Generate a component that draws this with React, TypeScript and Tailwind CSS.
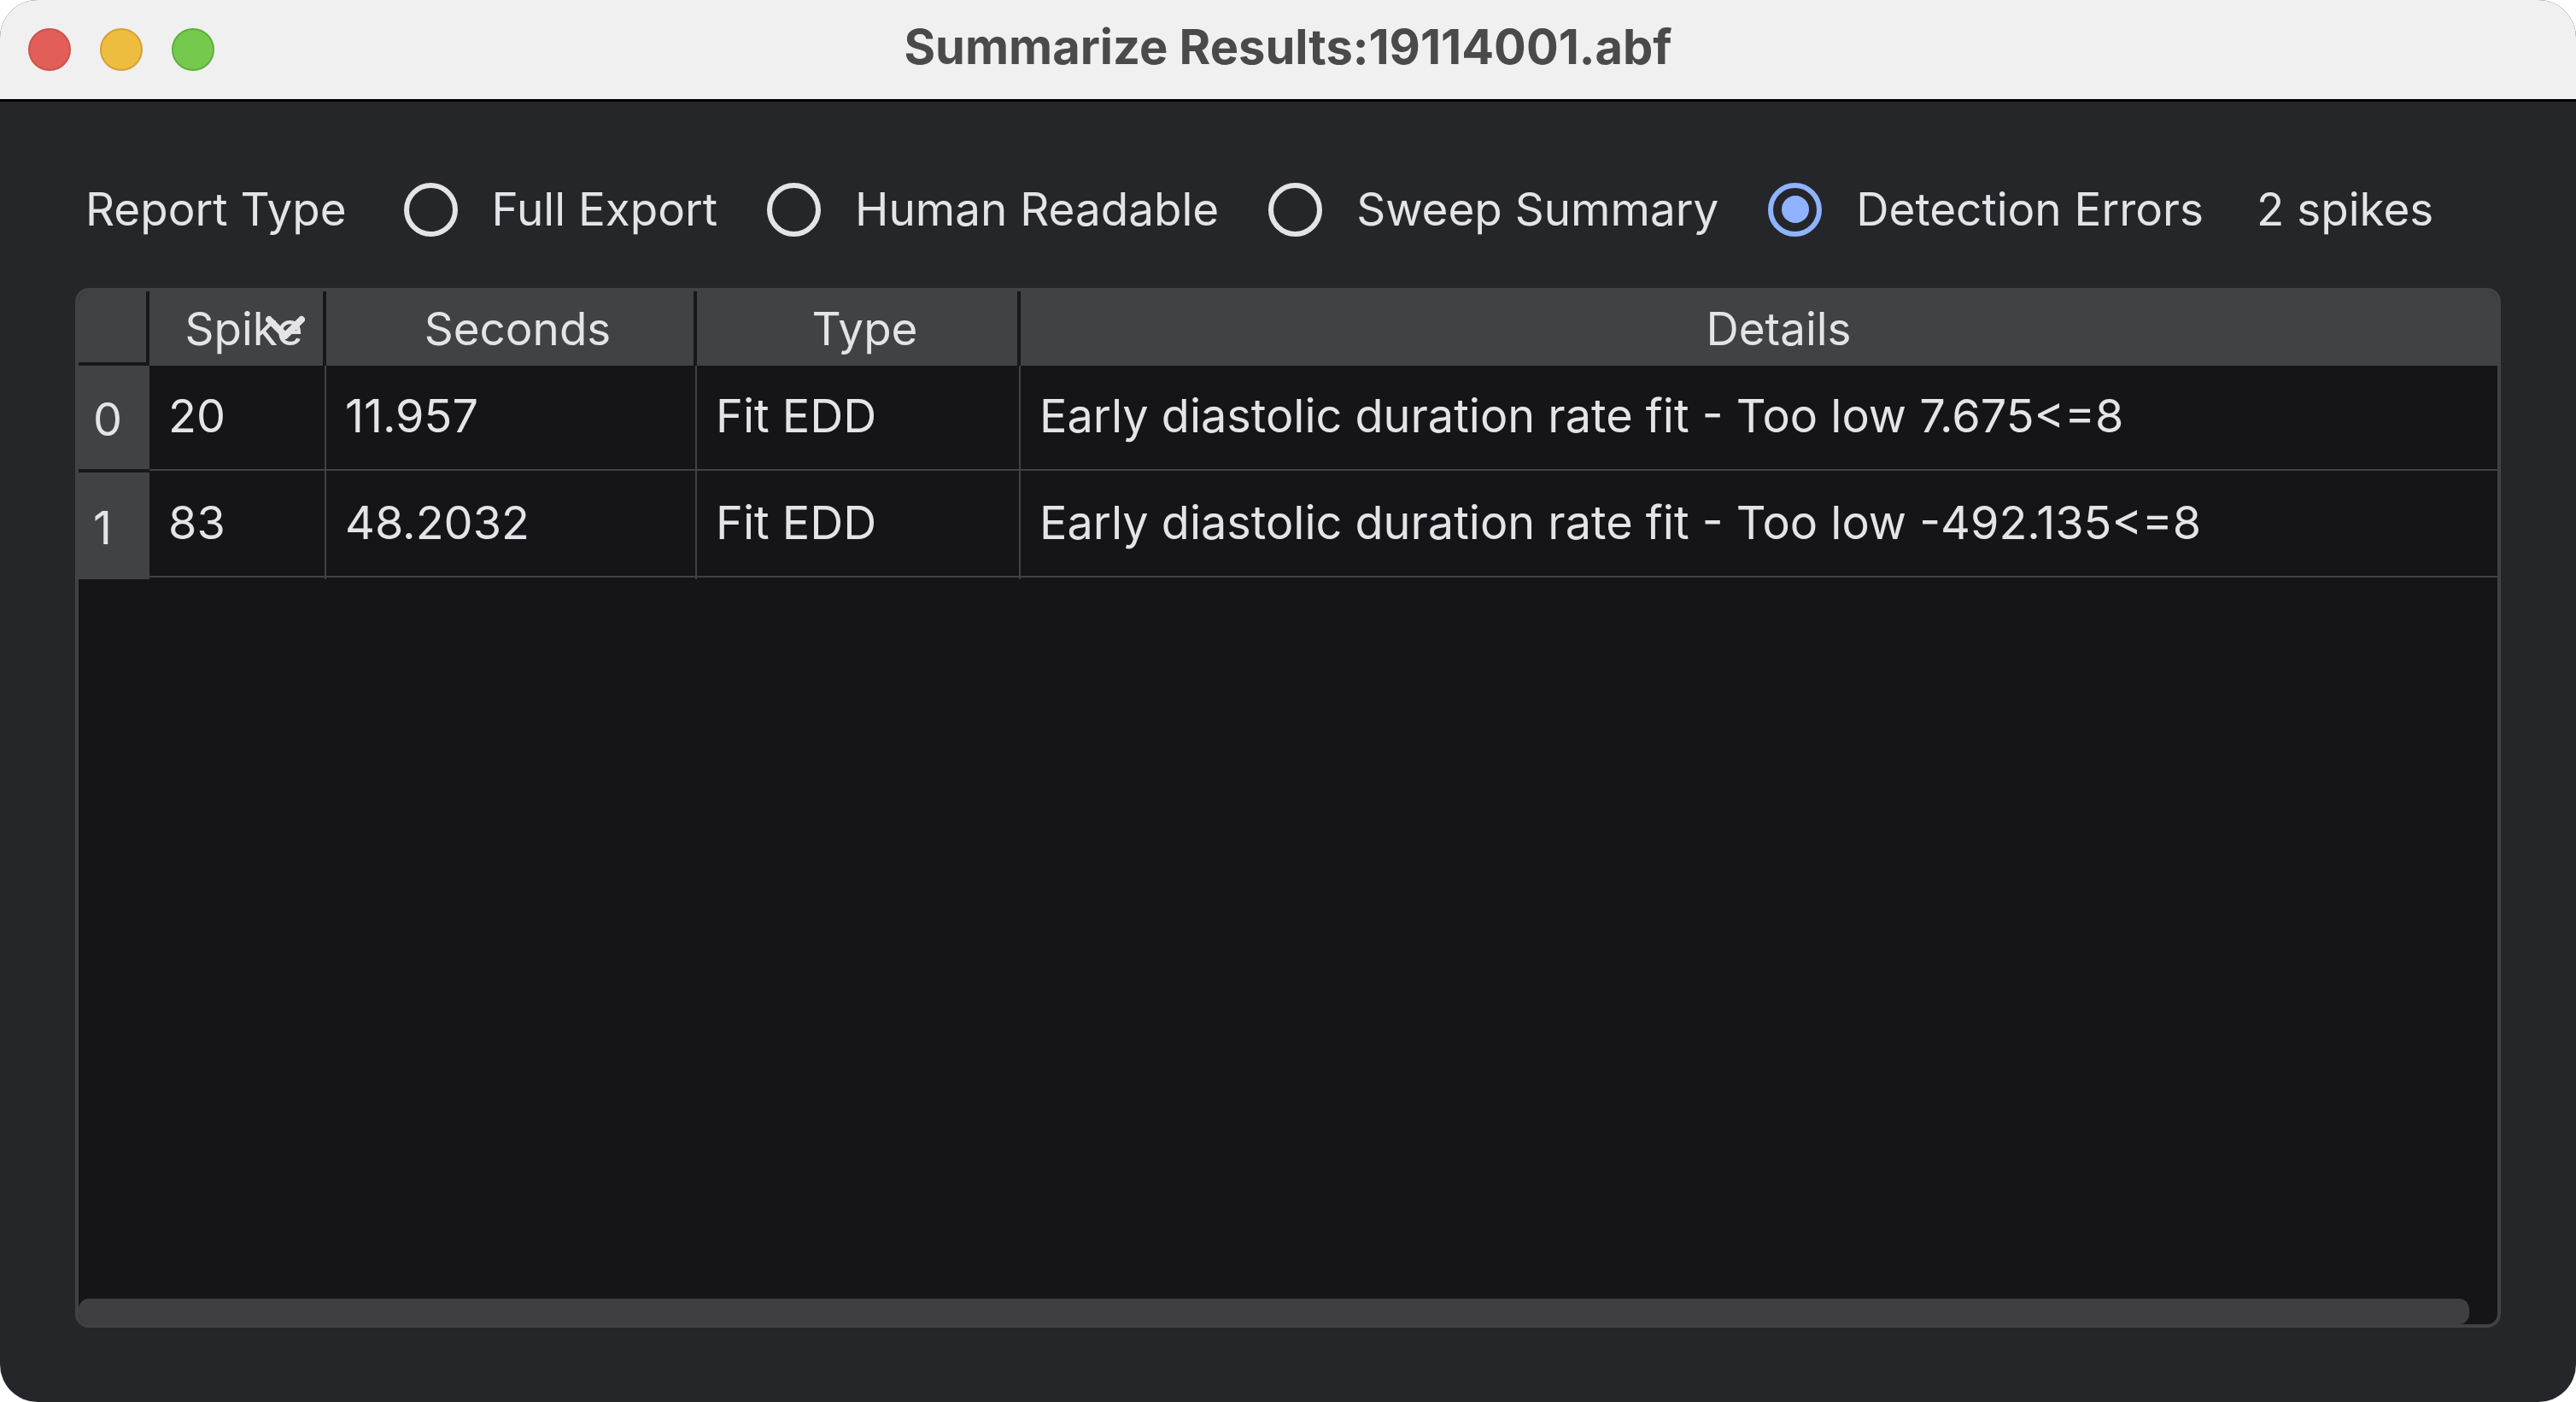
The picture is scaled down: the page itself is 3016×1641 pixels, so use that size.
import { useState } from "react";

const reportTypes = ["Full Export", "Human Readable", "Sweep Summary", "Detection Errors"];

const errors = [
  { spike: "20", seconds: "11.957", type: "Fit EDD", details: "Early diastolic duration rate fit - Too low 7.675<=8" },
  { spike: "83", seconds: "48.2032", type: "Fit EDD", details: "Early diastolic duration rate fit - Too low -492.135<=8" },
];

function TitleBar() {
  return (
    <header className="grid h-[119px] shrink-0 grid-cols-[1fr_auto_1fr] items-center border-b-[3px] border-black bg-[#f0f0f0] px-[33px]">
      <div className="flex gap-[34px]">
        <button aria-label="Close" className="size-[50px] rounded-full border-2 border-[#ce5249] bg-[#e15f58]" />
        <button aria-label="Minimize" className="size-[50px] rounded-full border-2 border-[#d5a03a] bg-[#eebd3f]" />
        <button aria-label="Zoom" className="size-[50px] rounded-full border-2 border-[#5fae3c] bg-[#75ca4e]" />
      </div>
      <h1 className="pb-1.5 text-[56px] leading-[64px] font-bold text-[#4a4a4a]">Summarize Results:19114001.abf</h1>
    </header>
  );
}

function ReportTypePicker() {
  const [selected, setSelected] = useState("Detection Errors");
  return (
    <fieldset className="flex items-center pl-3 text-[53px] whitespace-nowrap">
      <legend className="float-left mr-[67px]">Report Type</legend>
      {reportTypes.map((name) => (
        <label key={name} className="mr-[58px] flex items-center gap-10">
          <input
            type="radio"
            name="report-type"
            checked={selected === name}
            onChange={() => setSelected(name)}
            className="grid size-[63px] appearance-none place-items-center rounded-full border-[6px] border-[#e3e3e8] before:size-8 before:rounded-full checked:border-[#8fb3ff] checked:before:bg-[#8fb3ff]"
          />
          {name}
        </label>
      ))}
      <output className="pl-1">2 spikes</output>
    </fieldset>
  );
}

function SortIndicator() {
  return (
    <svg viewBox="0 0 46 28" className="absolute top-7 right-[21px] h-7 w-[46px]" fill="none" stroke="currentColor" strokeWidth="8" strokeLinecap="round" strokeLinejoin="round">
      <path d="M4 5 L23 24 L42 5" />
    </svg>
  );
}

export default function App() {
  return (
    <div className="min-h-screen bg-white">
      <main className="flex min-h-screen flex-col overflow-hidden rounded-[44px] bg-[#25262a] font-[Inter,sans-serif] text-[54px] leading-[64px] text-[#e3e3e8]">
        <TitleBar />
        <section className="flex grow flex-col gap-[60px] px-[88px] pt-[94px] pb-[87px]">
          <ReportTypePicker />
          <div className="flex grow flex-col overflow-hidden rounded-2xl border-4 border-[#414244] bg-[#151419]">
            <table className="w-full table-fixed border-separate border-spacing-0 text-left">
              <colgroup>
                <col className="w-[83px]" />
                <col className="w-[207px]" />
                <col className="w-[434px]" />
                <col className="w-[379px]" />
                <col />
              </colgroup>
              <thead>
                <tr className="h-[87px] bg-[#414244] text-center text-[53px] [&>*]:border-[#17181a] [&>*]:p-0 [&>*]:font-normal [&>th]:pl-[18px]">
                  <td className="border-r-4 border-b-4" />
                  <th className="relative border-r-4">
                    Spike
                    <SortIndicator />
                  </th>
                  <th className="border-r-4">Seconds</th>
                  <th className="border-r-4">Type</th>
                  <th>
                    <span className="pl-7">Details</span>
                  </th>
                </tr>
              </thead>
              <tbody>
                {errors.map((row, index) => (
                  <tr
                    key={row.spike}
                    className="group h-[125px] [&>td]:border-r-2 [&>td]:border-[#414244] [&>td]:p-0 [&>td]:pb-2 [&>td]:pl-[22px] [&>td]:shadow-[inset_0_-2px_0_#151419,inset_0_-4px_0_#414244] [&>td:last-child]:border-r-0"
                  >
                    <th className="border-[#17181a] bg-[#414244] p-0 pt-1 pl-[17px] font-normal group-first:border-b-4">{index}</th>
                    <td>{row.spike}</td>
                    <td>{row.seconds}</td>
                    <td>{row.type}</td>
                    <td>{row.details}</td>
                  </tr>
                ))}
              </tbody>
            </table>
            <div className="mt-auto mr-[33px] h-[30px] rounded-xl bg-[#3f3f41]" />
          </div>
        </section>
      </main>
    </div>
  );
}
